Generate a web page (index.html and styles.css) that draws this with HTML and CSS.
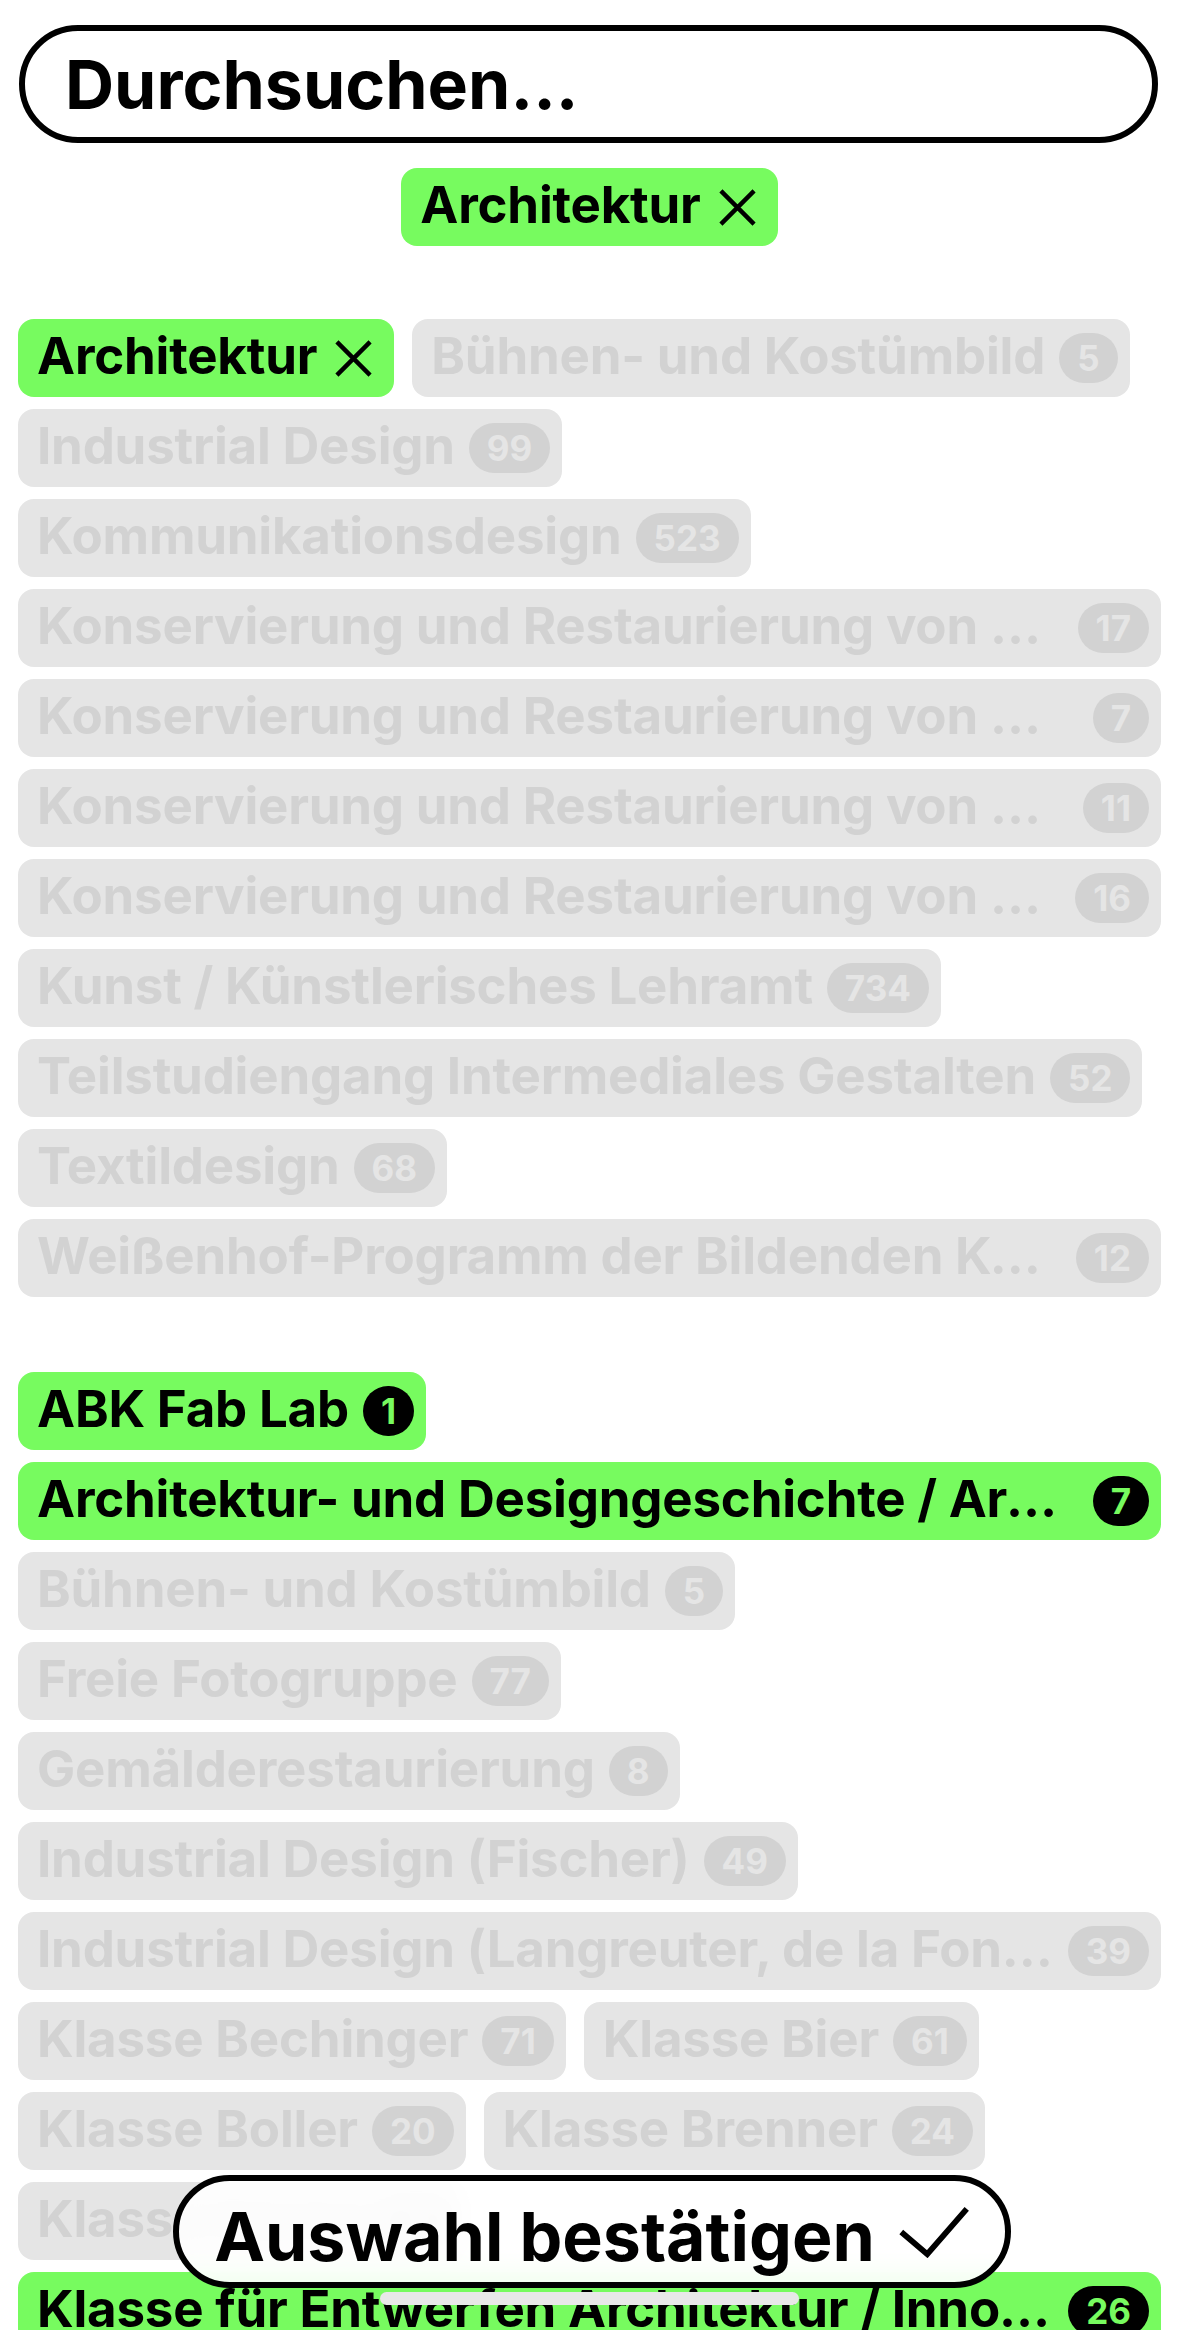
FILE: index.html
```html
<!DOCTYPE html>
<html lang="de">
<head>
  <meta charset="UTF-8" />
  <title>Studiengänge filtern</title>
  <link rel="stylesheet" href="styles.css">
</head>
<body>

  <div class="suche">
    <input class="suche-feld" type="text" placeholder="Durchsuchen..." />
  </div>

  <div class="auswahl">
    <div class="chip aktiv mit-x">
      <span class="chip-text">Architektur</span>
      <svg class="x" viewBox="0 0 40 40"><path d="M3 3L37 37M37 3L3 37" /></svg>
    </div>
  </div>

  <div class="gruppe">
    <div class="chip aktiv mit-x">
      <span class="chip-text">Architektur</span>
      <svg class="x" viewBox="0 0 40 40"><path d="M3 3L37 37M37 3L3 37" /></svg>
    </div>
    <div class="chip"><span class="chip-text">Bühnen- und Kostümbild</span><span class="anzahl">5</span></div>
    <div class="chip"><span class="chip-text">Industrial Design</span><span class="anzahl">99</span></div>
    <div class="chip"><span class="chip-text">Kommunikationsdesign</span><span class="anzahl">523</span></div>
    <div class="chip"><span class="chip-text">Konservierung und Restaurierung von archäologischen, ethnologischen und kunsthandwerklichen Objekten</span><span class="anzahl">17</span></div>
    <div class="chip"><span class="chip-text">Konservierung und Restaurierung von Gemälden und gefassten Skulpturen</span><span class="anzahl">7</span></div>
    <div class="chip"><span class="chip-text">Konservierung und Restaurierung von Kunstwerken auf Papier</span><span class="anzahl">11</span></div>
    <div class="chip"><span class="chip-text">Konservierung und Restaurierung von Wandmalerei und Steinpolychromie</span><span class="anzahl">16</span></div>
    <div class="chip"><span class="chip-text">Kunst / Künstlerisches Lehramt</span><span class="anzahl">734</span></div>
    <div class="chip"><span class="chip-text">Teilstudiengang Intermediales Gestalten</span><span class="anzahl">52</span></div>
    <div class="chip"><span class="chip-text">Textildesign</span><span class="anzahl">68</span></div>
    <div class="chip"><span class="chip-text">Weißenhof-Programm der Bildenden Kunst</span><span class="anzahl">12</span></div>
  </div>

  <div class="gruppe">
    <div class="chip aktiv"><span class="chip-text">ABK Fab Lab</span><span class="anzahl">1</span></div>
    <div class="chip aktiv"><span class="chip-text">Architektur- und Designgeschichte / Architekturtheorie</span><span class="anzahl">7</span></div>
    <div class="chip"><span class="chip-text">Bühnen- und Kostümbild</span><span class="anzahl">5</span></div>
    <div class="chip"><span class="chip-text">Freie Fotogruppe</span><span class="anzahl">77</span></div>
    <div class="chip"><span class="chip-text">Gemälderestaurierung</span><span class="anzahl">8</span></div>
    <div class="chip"><span class="chip-text">Industrial Design (Fischer)</span><span class="anzahl">49</span></div>
    <div class="chip"><span class="chip-text">Industrial Design (Langreuter, de la Fontaine)</span><span class="anzahl">39</span></div>
    <div class="chip"><span class="chip-text">Klasse Bechinger</span><span class="anzahl">71</span></div>
    <div class="chip"><span class="chip-text">Klasse Bier</span><span class="anzahl">61</span></div>
    <div class="chip"><span class="chip-text">Klasse Boller</span><span class="anzahl">20</span></div>
    <div class="chip"><span class="chip-text">Klasse Brenner</span><span class="anzahl">24</span></div>
    <div class="chip"><span class="chip-text">Klasse Cerny</span><span class="anzahl">18</span></div>
    <div class="chip aktiv"><span class="chip-text">Klasse für Entwerfen Architektur / Innovation</span><span class="anzahl">26</span></div>
  </div>

  <button class="bestaetigen">
    Auswahl bestätigen
    <svg class="haken" viewBox="0 0 74 54"><path d="M3 27L30 50L71 3" /></svg>
  </button>

  <div class="home-balken"></div>

</body>
</html>
```

FILE: styles.css
```css
* {
  box-sizing: border-box;
}
body {
  margin: 0;
  padding: 25px 18px 0;
  font-family: Inter, "Noto Sans", sans-serif;
  background: #fff;
  color: #000;
}
.suche {
  height: 118px;
  margin: 0 3px 0 1px;
  border: 6px solid #000;
  border-radius: 59px;
  display: flex;
  align-items: center;
  padding: 0 40px;
}
.suche-feld {
  width: 100%;
  border: none;
  outline: none;
  background: transparent;
  padding: 0;
  font-family: Inter, "Noto Sans", sans-serif;
  font-size: 68px;
  font-weight: 700;
  color: #000;
}
.suche-feld::placeholder {
  color: #000;
  opacity: 1;
}
.auswahl {
  display: flex;
  justify-content: center;
  margin-top: 25px;
}
.gruppe {
  display: flex;
  flex-wrap: wrap;
  gap: 12px 18px;
  margin-top: 73px;
}
.gruppe + .gruppe {
  margin-top: 75px;
}
.chip {
  display: flex;
  align-items: center;
  gap: 14px;
  height: 78px;
  min-width: 0;
  max-width: 100%;
  padding: 0 12px 0 19px;
  border-radius: 16px;
  background: #e5e5e5;
  color: #d2d2d2;
  font-size: 51px;
  font-weight: 700;
  letter-spacing: -0.2px;
}
.chip-text {
  white-space: nowrap;
  overflow: hidden;
  text-overflow: ellipsis;
  min-width: 0;
  line-height: 1.2;
  margin-bottom: 5px;
}
.anzahl {
  flex-shrink: 0;
  display: flex;
  align-items: center;
  justify-content: center;
  height: 50px;
  min-width: 50px;
  padding: 0 18px;
  border-radius: 25px;
  background: #d2d2d2;
  color: #e5e5e5;
  font-size: 35px;
  line-height: 1;
  letter-spacing: 0;
}
.chip.aktiv {
  background: #77fb5f;
  color: #000;
}
.chip.aktiv .anzahl {
  background: #000;
  color: #77fb5f;
}
.chip.mit-x {
  gap: 17px;
  padding-right: 21px;
}
.x {
  width: 39px;
  height: 39px;
  flex-shrink: 0;
}
.x path {
  stroke: #000;
  stroke-width: 4.5;
  fill: none;
}
.bestaetigen {
  position: fixed;
  left: 173px;
  right: 168px;
  bottom: 42px;
  height: 113px;
  display: flex;
  align-items: center;
  justify-content: center;
  gap: 23px;
  padding: 9px 0 0;
  border: 6px solid #000;
  border-radius: 57px;
  background: rgba(255, 255, 255, 0.9);
  backdrop-filter: blur(12px);
  font-family: Inter, "Noto Sans", sans-serif;
  font-size: 68px;
  font-weight: 700;
  color: #000;
  cursor: pointer;
}
.haken {
  width: 72px;
  height: 52px;
  margin-top: -8px;
}
.haken path {
  stroke: #000;
  stroke-width: 6;
  fill: none;
}
.home-balken {
  position: fixed;
  left: 380px;
  bottom: 25px;
  width: 419px;
  height: 13px;
  border-radius: 7px;
  background: #e8e8e8;
}
```
